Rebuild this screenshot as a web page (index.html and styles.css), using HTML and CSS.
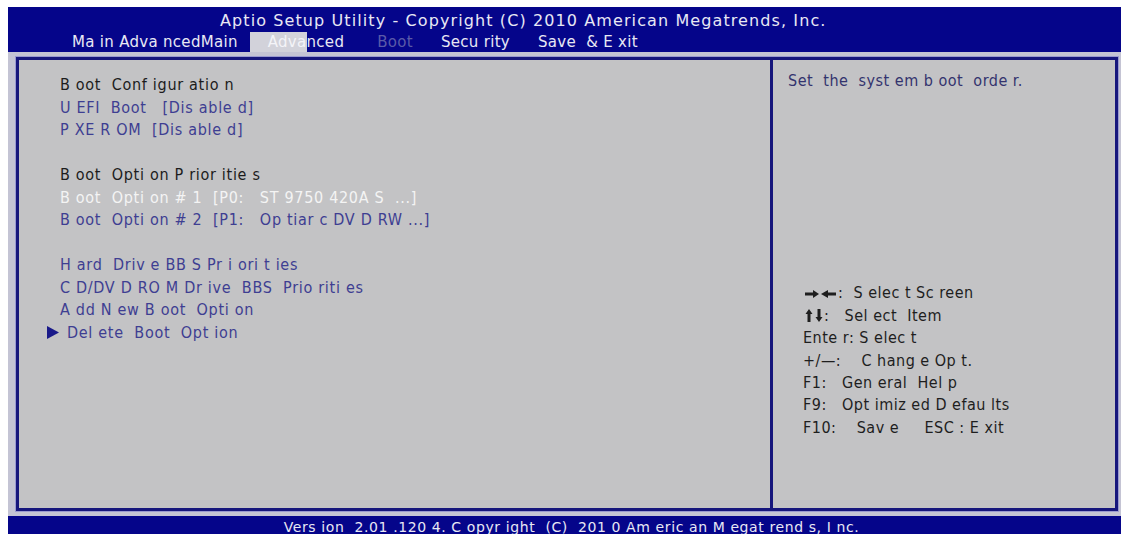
FILE: index.html
```html
<!DOCTYPE html>
<html>
<head>
<meta charset="utf-8">
<link rel="stylesheet" href="styles.css">
</head>
<body>
<div class="screen">
  <header class="topbar">
    <div class="title">Aptio Setup Utility - Copyright (C) 2010 American Megatrends, Inc.</div>
    <nav class="menu">
      <span class="m-main">Ma in Adva ncedMain</span>
      <span class="m-adv"><span class="hl">Adva</span>nced</span>
      <span class="m-boot">Boot</span>
      <span class="m-sec">Secu rity</span>
      <span class="m-save">Save&nbsp; &amp; E xit</span>
    </nav>
  </header>
  <div class="frame">
    <div class="panel">
      <section class="left">
        <div class="row head">B oot&nbsp; Conf igur atio n</div>
        <div class="row item">U EFI&nbsp; Boot&nbsp;&nbsp; [Dis able d]</div>
        <div class="row item">P XE R OM&nbsp; [Dis able d]</div>
        <div class="row"></div>
        <div class="row head">B oot&nbsp; Opti on P rior itie s</div>
        <div class="row sel">B oot&nbsp; Opti on # 1&nbsp; [P0:&nbsp;&nbsp; ST 9750 420A S&nbsp; ...]</div>
        <div class="row item">B oot&nbsp; Opti on # 2&nbsp; [P1:&nbsp;&nbsp; Op tiar c DV D RW ...]</div>
        <div class="row"></div>
        <div class="row item">H ard&nbsp; Driv e BB S Pr i ori t ies</div>
        <div class="row item">C D/DV D RO M Dr ive&nbsp; BBS&nbsp; Prio riti es</div>
        <div class="row item">A dd N ew B oot&nbsp; Opti on</div>
        <div class="row item ptr"><svg class="tri" width="12" height="13" viewBox="0 0 12 13"><polygon points="0,0 12,6.5 0,13" fill="#1a1a8a"/></svg>Del ete&nbsp; Boot&nbsp; Opt ion</div>
      </section>
      <aside class="right">
        <div class="desc">Set&nbsp; the&nbsp; syst em b oot&nbsp; orde r.</div>
        <div class="help">
          <div class="hrow"><svg class="lr" width="31" height="8" viewBox="0 0 31 8"><polygon points="0,2.5 8,2.5 8,0 14,4 8,8 8,5.5 0,5.5" fill="#1e1e1e"/><polygon points="31,2.5 23,2.5 23,0 16,4 23,8 23,5.5 31,5.5" fill="#1e1e1e"/></svg>:&nbsp; S elec t Sc reen</div>
          <div class="hrow"><svg class="ud" width="18" height="13" viewBox="0 0 18 13"><polygon points="0.5,5 4,0 7.5,5 5.5,5 5.5,13 2.5,13 2.5,5" fill="#1e1e1e"/><polygon points="10.5,8 14,13 17.5,8 15.5,8 15.5,0 12.5,0 12.5,8" fill="#1e1e1e"/></svg>:&nbsp;&nbsp; Sel ect&nbsp; Item</div>
          <div class="hrow">Ente r: S elec t</div>
          <div class="hrow">+/—:&nbsp;&nbsp;&nbsp; C hang e Op t.</div>
          <div class="hrow">F1:&nbsp;&nbsp; Gen eral&nbsp; Hel p</div>
          <div class="hrow">F9:&nbsp;&nbsp; Opt imiz ed D efau lts</div>
          <div class="hrow">F10:&nbsp;&nbsp;&nbsp; Sav e&nbsp;&nbsp;&nbsp;&nbsp; ESC : E xit</div>
        </div>
      </aside>
    </div>
  </div>
  <footer class="bottombar">Vers ion&nbsp; 2.01 .120 4. C opyr ight&nbsp; (C)&nbsp; 201 0 Am eric an M egat rend s, I nc.</footer>
</div>
</body>
</html>
```

FILE: styles.css
```css
html, body {
  margin: 0;
  padding: 0;
  background: #ffffff;
}

.screen {
  margin: 7px 0 0 8px;
  width: 1113px;
  font-family: "DejaVu Sans Condensed", "DejaVu Sans", sans-serif;
  font-stretch: condensed;
}

.topbar {
  background: #05058a;
  height: 45px;
  color: #e8e8f4;
  box-sizing: border-box;
  padding-top: 5px;
}

.title {
  font-family: "DejaVu Sans", sans-serif;
  font-stretch: normal;
  font-size: 16px;
  line-height: 18px;
  padding-left: 212px;
  letter-spacing: 1.1px;
  white-space: nowrap;
}

.menu {
  display: flex;
  font-family: "DejaVu Sans", sans-serif;
  font-stretch: normal;
  font-size: 15px;
  line-height: 20px;
  letter-spacing: 0.3px;
  padding-left: 64px;
  margin-top: 2px;
  white-space: nowrap;
}

.m-main { margin-right: 12px; }
.m-adv { margin-right: 33px; }
.hl {
  display: inline-block;
  background: #d2d2da;
  color: #f4f4f8;
  padding-left: 18px;
}
.m-boot { color: #5a5aa8; margin-right: 28px; }
.m-sec { margin-right: 28px; }

.frame {
  background: #c4c4d4;
  padding: 5px 3px 5px 8px;
}

.panel {
  display: flex;
  height: 448px;
  border: 3px solid #16167c;
  box-shadow: 0 0 0 1px #9a9ad0;
  background: #c3c3c5;
}

.left {
  width: 754px;
  border-right: 3px solid #16167c;
  box-sizing: border-box;
  padding: 14px 0 0 41px;
  font-size: 16px;
  letter-spacing: 0.7px;
  line-height: 22.5px;
  white-space: nowrap;
}

.row { height: 22.5px; }
.head { color: #1c1c1c; }
.item { color: #3e3e92; }
.sel { color: #f4f4f4; }

.ptr {
  display: flex;
  align-items: center;
  margin-left: -13px;
}
.tri { margin-right: 8px; }

.right {
  flex: 1;
  padding: 10px 0 0 15px;
  font-size: 16px;
  letter-spacing: 0.5px;
  line-height: 22.4px;
  white-space: nowrap;
}

.desc { color: #33336e; }

.help {
  margin-top: 190px;
  padding-left: 15px;
  color: #1e1e1e;
}

.hrow {
  display: flex;
  align-items: center;
  height: 22.4px;
}
.lr { margin: 0 2px 0 2px; }
.ud { margin: 0 1px 0 2px; }

.bottombar {
  background: #05058a;
  color: #e8e8f4;
  height: 23px;
  line-height: 23px;
  font-family: "DejaVu Sans", sans-serif;
  font-stretch: normal;
  font-size: 14px;
  letter-spacing: 0.6px;
  text-align: center;
  padding-left: 14px;
  box-sizing: border-box;
  white-space: nowrap;
}
```
